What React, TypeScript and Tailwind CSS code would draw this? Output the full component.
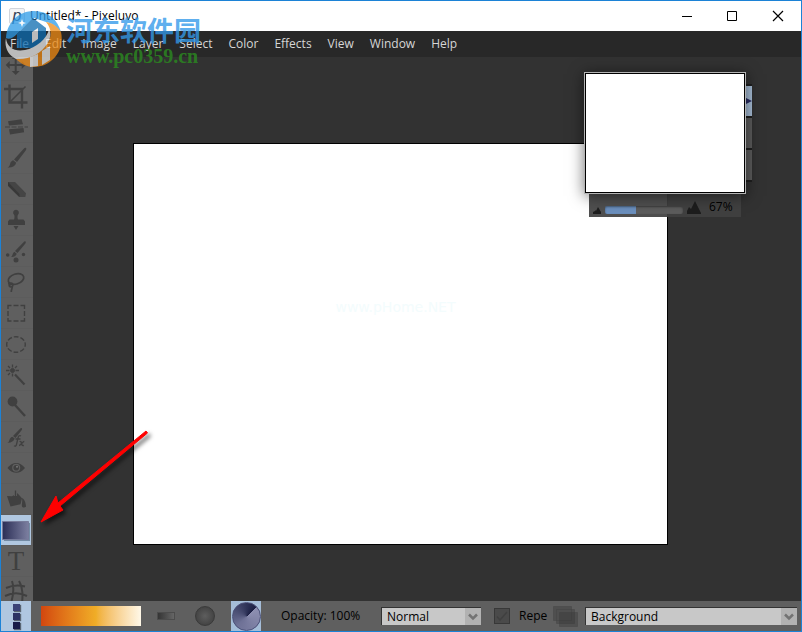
import { useState } from 'react';
import type { ReactNode } from 'react';

const MENUS = ['File', 'Edit', 'Image', 'Layer', 'Select', 'Color', 'Effects', 'View', 'Window', 'Help'];

interface Tool {
  name: string;
  icon: ReactNode;
}

const TOOLS: Tool[] = [
  {
    name: 'Move',
    icon: (
      <path
        d="M13.700 9h-3l4-4 4 4h-3v5h5v-3l4 4-4 4v-3h-5v5h3l-4 4-4-4h3v-5h-5v3l-4-4 4-4v3h5z"
        fill="currentColor"
      />
    ),
  },
  {
    name: 'Crop',
    icon: (
      <g fill="none" stroke="currentColor" strokeWidth="2.4">
        <path d="M8.500 3.500v18h18M3 8h18v19.500" />
        <path d="M8.500 21.500l16-16" strokeWidth="1.600" />
      </g>
    ),
  },
  {
    name: 'Straighten',
    icon: (
      <>
        <path d="M7 9.200l13.500-2 1.500 5-14 1.200zM8 17.300L22.500 16l.6 4.200L9 22.500z" fill="currentColor" />
        <path d="M4 15h23" stroke="currentColor" strokeWidth="1.200" strokeDasharray="5 1.500" />
      </>
    ),
  },
  {
    name: 'Brush',
    icon: (
      <path
        d="M25 5c.6.5.3 1.500-.3 2.500L16 19l-3-2.500L22.500 6c.9-1 1.900-1.500 2.500-1zM12.200 17.300l3 2.500c-.8 3.200-3.600 5-8.700 4.700 2.200-1 2.200-2.200 2.700-4 .5-1.700 1.600-2.700 3-3.200z"
        fill="currentColor"
      />
    ),
  },
  {
    name: 'Eraser',
    icon: (
      <>
        <path d="M7 8h7l11 11.300-.7 3.700h-6L7 11.700z" fill="#454545" />
        <path d="M7 8l11.500 12-.2 3L7 11.700z" fill="#383838" />
      </>
    ),
  },
  {
    name: 'Stamp',
    icon: (
      <path
        d="M15 4.800a2.900 2.900 0 0 1 2 5c-.6.700-.7 3.200 0 4.700h5.500l1.500 2V20H7v-3.500l1.500-2H13c.8-1.500.6-4 0-4.700a2.900 2.900 0 0 1 2-5zM12.500 21h5L15 25z"
        fill="currentColor"
      />
    ),
  },
  {
    name: 'Clone brush',
    icon: (
      <g fill="currentColor">
        <path d="M24.500 5.500c.6.500.2 1.500-.3 2.300L16.500 17 14 15l8.300-8.500c.7-.8 1.600-1.500 2.200-1zM13.300 15.700l2.400 2c-.7 2.500-2.500 3.500-5.500 3.300 1.500-1.300 1.200-3.800 3.100-5.300z" />
        <circle cx="6.700" cy="19" r="1.800" />
        <circle cx="22.500" cy="18.500" r="1.700" />
        <circle cx="15" cy="24" r="2.500" />
      </g>
    ),
  },
  {
    name: 'Lasso',
    icon: (
      <g fill="none" stroke="currentColor" strokeWidth="1.700">
        <ellipse cx="15" cy="12" rx="8" ry="5" transform="rotate(-18 15 12)" />
        <circle cx="10" cy="18" r="1.800" />
        <path d="M7.500 15.500c.4 1.500 1.500 2 2.500 2.500M11 19c1 2-1 3.500-.7 6" />
      </g>
    ),
  },
  {
    name: 'Rectangle select',
    icon: (
      <path
        d="M7 11V7.500h3.500M12.500 7.500h5M19.500 7.500h4V11M23.500 13v5M23.500 20v3h-4M17.500 23h-5M10.500 23H7v-3M7 18v-5"
        fill="none"
        stroke="currentColor"
        strokeWidth="1.400"
      />
    ),
  },
  {
    name: 'Ellipse select',
    icon: (
      <ellipse
        cx="15"
        cy="15.500"
        rx="9.300"
        ry="7.800"
        fill="none"
        stroke="currentColor"
        strokeWidth="1.400"
        strokeDasharray="4.700 2"
        strokeDashoffset="2.300"
      />
    ),
  },
  {
    name: 'Magic wand',
    icon: (
      <g stroke="currentColor">
        <circle cx="11.500" cy="10.500" r="2" fill="currentColor" />
        <path d="M11.500 4.500v3M11.500 13.500v3M5 10.500h3.500M14.500 10.500H18M7 6l2 2M16 6l-2 2M7 15l2-2" strokeWidth="1.300" />
        <path d="M14 14.500l9.500 10" strokeWidth="2.200" />
      </g>
    ),
  },
  {
    name: 'Dodge',
    icon: (
      <>
        <circle cx="11.500" cy="10.500" r="4.900" fill="currentColor" />
        <path d="M14 14l10 11" stroke="currentColor" strokeWidth="2.400" />
      </>
    ),
  },
  {
    name: 'Effect brush',
    icon: (
      <>
        <path
          d="M20.800 6.200c.5.400.2 1.300-.2 2L14.500 16 12 14l6.800-7c.6-.7 1.500-1.200 2-.8zM11.400 14.700l2.300 1.900c-.8 2.700-3 4.200-7.200 4.200 1.900-1 1.500-1.800 2.100-3.300.5-1.500 1.600-2.500 2.800-2.800z"
          fill="currentColor"
        />
        <path
          d="M20 14c-1.300-1-2.500-.2-2.900 1.500l-1.600 7c-.4 1.700-1.500 2-2.500 1.300M14.500 17h5M18.500 19.500c1.500-.5 1.700.5 2 2s.8 2.500 2.300 1.800M23.300 19.300c-1.500 0-3.500 4.200-5.300 4.200"
          fill="none"
          stroke="currentColor"
          strokeWidth="1.300"
        />
      </>
    ),
  },
  {
    name: 'Red eye',
    icon: (
      <>
        <path d="M6.500 15c3.500-4.300 6-5 8.700-5 3.300 0 5.900 1.500 8.800 5-3 3.500-5.500 4.700-8.800 4.700-3 0-5.700-1.200-8.700-4.700z" fill="currentColor" />
        <circle cx="15.200" cy="14.800" r="4" fill="#5f5f5f" />
        <circle cx="15.200" cy="14.800" r="2.800" fill="currentColor" />
        <circle cx="16" cy="13.800" r="1" fill="#777" />
      </>
    ),
  },
  {
    name: 'Paint bucket',
    icon: (
      <>
        <path d="M6 12l5 .3 5.500-3 4.500 5-1.500 6L9.500 22.500z" fill="currentColor" />
        <path d="M14.500 12V7" stroke="#5f5f5f" strokeWidth="3" />
        <path d="M14.500 6.500V13" stroke="currentColor" strokeWidth="1.300" />
        <path d="M21 14c2.500 1 4 5.500 4 8.800-1.300 1.200-3.500 1-4-.3-.7-2 .8-4.500 0-8.500z" fill="currentColor" />
      </>
    ),
  },
  {
    name: 'Gradient',
    icon: (
      <>
        <defs>
          <linearGradient id="tool-gradient">
            <stop offset="0" stopColor="#2b2e56" />
            <stop offset="1" stopColor="#7c7fa0" />
          </linearGradient>
        </defs>
        <path d="M3 8h26v18H3z" fill="#738ba5" />
        <path d="M1.500 6.500h26v18h-26z" fill="url(#tool-gradient)" stroke="#777b9a" />
      </>
    ),
  },
  {
    name: 'Text',
    icon: (
      <text x="15" y="24" textAnchor="middle" fill="currentColor" className="font-['Liberation_Serif'] text-[27px]">
        T
      </text>
    ),
  },
  {
    name: 'Warp',
    icon: (
      <path
        d="M11 4c2 6 1.500 14-1 22M18 4c3.500 6 4 14 3 22M5 11c7-3 13-3 19-1.500M4 19c7-3.500 14-4 22 0"
        fill="none"
        stroke="currentColor"
        strokeWidth="2"
      />
    ),
  },
];

function TitleBar() {
  return (
    <header className="flex h-[30px] shrink-0 items-center bg-white pl-2">
      <span className="flex size-4 items-center justify-center rounded-xs border border-gray-300 bg-gray-100 font-['Liberation_Sans'] text-base leading-none text-slate-700 italic">
        p
      </span>
      <h1 className="ml-[5px] grow text-xs text-black">Untitled* - Pixeluvo</h1>
      <button aria-label="Minimize" className="flex h-full w-[46px] items-center justify-center">
        <svg width="12" height="12" stroke="#000">
          <path d="M1 6.500h10" />
        </svg>
      </button>
      <button aria-label="Maximize" className="flex h-full w-[45px] items-center justify-center">
        <svg width="11" height="11" fill="none" stroke="#000">
          <path d="M.5.500h9v9h-9z" />
        </svg>
      </button>
      <button aria-label="Close" className="flex h-full w-[46px] items-center justify-center">
        <svg width="12" height="12" stroke="#000" strokeWidth="1.200">
          <path d="M1 1l10 10M11 1L1 11" />
        </svg>
      </button>
    </header>
  );
}

function MenuBar() {
  return (
    <nav className="flex h-[26px] shrink-0 items-center gap-4 bg-[#282828] pl-[9px] text-xs text-[#d6d6d6]">
      {MENUS.map((menu) => (
        <button key={menu}>{menu}</button>
      ))}
    </nav>
  );
}

function ToolBar() {
  const [active, setActive] = useState('Gradient');

  return (
    <aside className="flex w-8 shrink-0 flex-col justify-center overflow-hidden bg-[#5f5f5f]">
      {TOOLS.map((tool) => (
        <button
          key={tool.name}
          aria-label={tool.name}
          onClick={() => setActive(tool.name)}
          className="h-[31px] shrink-0 border-b border-[#5c5c5c] text-[#404040]"
        >
          <svg
            viewBox="0 0 30 30"
            className={tool.name === active ? 'size-[30px] bg-[#b0c7e0]' : 'size-[30px]'}
          >
            {tool.icon}
          </svg>
        </button>
      ))}
    </aside>
  );
}

function Navigator() {
  return (
    <div className="absolute top-[15px] right-[49px]">
      <div className="flex items-start">
        <div className="z-10 h-[122px] w-[162px] border border-[#b4b4b4] bg-white shadow-[0_2px_14px_rgba(0,0,0,0.55)]">
          <div className="h-full border border-black" />
        </div>
        <div className="mt-3 flex w-1.5 flex-col gap-0.5 bg-[#1f1f1f] py-0.5">
          <button aria-label="Navigator" className="flex h-[30px] items-center bg-[#a8bfd8]">
            <svg width="6" height="8" fill="#2b2e66">
              <path d="M0 1l6 3-6 3z" />
            </svg>
          </button>
          <button aria-label="Histogram" className="h-[30px] bg-[#5c5c5c]" />
          <button aria-label="History" className="h-[30px] bg-[#5c5c5c]" />
        </div>
      </div>
      <div className="ml-[5px] flex h-[23px] w-[152px] items-end bg-[#424242]/93 pb-[3px] pl-1 text-xs text-black">
        <svg width="8" height="7" fill="#1d1d1d">
          <path d="M0 7V5l2-1v-1l1 1 2-4 3 5v2z" />
        </svg>
        <input
          type="range"
          aria-label="Zoom"
          defaultValue={40}
          className="mx-1 h-2 w-[78px] appearance-none rounded-xs bg-linear-to-r from-[#6b8fbd] from-40% to-[#5c5c5c] to-40% shadow-[inset_0_1px_2px_rgba(0,0,0,0.4)] [&::-webkit-slider-thumb]:size-0 [&::-webkit-slider-thumb]:appearance-none"
        />
        <svg width="14" height="13" fill="#1d1d1d">
          <path d="M0 13v-3l2-4 2 2 4-8 6 12v1z" />
        </svg>
        <output className="ml-2 leading-[14px]">67%</output>
      </div>
    </div>
  );
}

interface DropDownProps {
  label: string;
  value: string;
  className: string;
}

function DropDown({ label, value, className }: DropDownProps) {
  return (
    <div className={`relative h-[18px] ${className}`}>
      <select
        aria-label={label}
        className="block h-full w-full appearance-none border-t border-l border-[#333] bg-[#c8c8c8] pl-[5px] text-xs leading-4 text-black"
      >
        <option>{value}</option>
      </select>
      <span className="pointer-events-none absolute top-px right-0 bottom-0 flex w-4 items-center justify-center bg-[#b2b2b2]">
        <svg width="10" height="8" fill="none" stroke="#737373" strokeWidth="2.500">
          <path d="M1 1.500l4 4 4-4" />
        </svg>
      </span>
    </div>
  );
}

function OptionsBar() {
  return (
    <footer className="flex h-[30px] shrink-0 items-center bg-[#5f5f5f] text-xs text-black">
      <button
        aria-label="Gradient presets"
        className="flex h-full w-[30px] shrink-0 flex-col items-center justify-center gap-0.5 bg-[#b0c7e0]"
      >
        <span className="size-[7px] bg-[#3c4377] shadow-[1px_1px_1px_rgba(0,0,0,0.5)]" />
        <span className="size-[7px] bg-[#2c3263] shadow-[1px_1px_1px_rgba(0,0,0,0.5)]" />
        <span className="size-[7px] bg-[#181c48] shadow-[1px_1px_1px_rgba(0,0,0,0.5)]" />
      </button>
      <button
        aria-label="Edit gradient"
        className="ml-2.5 h-5 w-[100px] shrink-0 bg-linear-to-r from-[#d2460f] via-[#f0ad27] via-55% to-[#fff8e8]"
      />
      <button aria-label="Linear" className="ml-4 h-2 w-[18px] shrink-0 border border-[#4c4c4c] bg-linear-to-r from-[#353535] to-[#666]" />
      <button
        aria-label="Radial"
        className="ml-5 size-5 shrink-0 rounded-full border border-[#3a3a3a] bg-radial from-[#5e5e5e] to-[#3a3a3a]"
      />
      <button aria-label="Angular" className="ml-4 flex size-[30px] shrink-0 items-center justify-center bg-[#a5bdd8]">
        <span className="size-[29px] rounded-full border border-[#4b5078] bg-conic-45 from-[#8e90b2] via-[#6e7196] to-[#1c2044]" />
      </button>
      <button className="ml-5 w-20 shrink-0 text-left whitespace-nowrap">Opacity: 100%</button>
      <DropDown label="Blend mode" value="Normal" className="ml-5 w-[100px] shrink-0" />
      <label className="ml-[13px] flex w-[54px] shrink-0 items-center gap-[9px]">
        <span className="relative size-4 shrink-0">
          <input type="checkbox" defaultChecked className="block size-4 appearance-none border border-[#383838] bg-[#4a4a4a]" />
          <svg viewBox="0 0 16 16" className="pointer-events-none absolute inset-0" fill="none" stroke="#404040" strokeWidth="1.500">
            <path d="M3 8.500l3 3.500 7-8" />
          </svg>
        </span>
        Repe
      </label>
      <svg width="25" height="21" className="ml-[5px] shrink-0" fill="#333" fillOpacity="0.350" stroke="#3a3a3a" strokeOpacity="0.300">
        <path d="M.5.500h18v14H.5zM3.500 3.500h18v14h-18z" />
        <path d="M6.500 6.500h18v14h-18z" />
      </svg>
      <DropDown label="Layer" value="Background" className="mr-1 ml-[7px] grow" />
    </footer>
  );
}

// Site watermark laid over the top left corner of the window
function SiteMark() {
  return (
    <div className="pointer-events-none absolute top-[9px] left-1 z-20 flex items-start gap-1">
      <svg width="57" height="58" viewBox="0 0 57 58" opacity="0.750">
        <path d="M1 28C2 12 14 1 29 1c14 0 24 9 27 21-4-5-9-9-15-10L29 8 12 24C8 28 4 30 1 28z" fill="#2d9be8" />
        <path d="M12 24L28 8l13 10v20H12z" fill="#0d6bb0" />
        <path d="M41 12c7 1 12 5 15 10 4 18-9 35-27 35-7 0-13-3-18-8 12 0 24-6 31-15 5-7 5-15-1-22z" fill="#f08a12" />
        <path d="M1 28c-2 9 2 17 10 21 13 1 25-5 31-15 4-6 4-11 2-15-2 10-13 19-24 21C10 42 2 38 1 28z" fill="#ececec" />
        <path d="M27 33V22l6-4v11zM25 47l8-3v12l-8 1zM37 41l8-5v14l-8 5z" fill="#ececec" />
        <path d="M17 9l1 3 3 1-3 1-1 3-1-3-3-1 3-1z" fill="#fff" />
      </svg>
      <div className="mt-0.5">
        <p className="font-['Noto_Sans_CJK_SC',sans-serif] text-[27px] leading-9 font-bold text-[#3399ea]/80">河东软件园</p>
        <p className="font-['Liberation_Serif',serif] text-xl leading-4 font-bold text-[#2b8221]/90">www.pc0359.cn</p>
      </div>
    </div>
  );
}

function Arrow() {
  return (
    <svg
      width="120"
      height="104"
      className="pointer-events-none absolute top-[427px] left-[34px] z-20 drop-shadow-[3px_3px_2px_rgba(0,0,0,0.6)]"
    >
      <path d="M111 3l1.500 2L25 78l3 4-22 12L21 68l2 7z" fill="#f00" stroke="#f00" />
    </svg>
  );
}

export default function App() {
  return (
    <div className="relative flex h-screen flex-col overflow-hidden border border-[#1c82d6] bg-[#323232] font-['Open_Sans','Noto_Sans',sans-serif]">
      <TitleBar />
      <MenuBar />
      <div className="flex min-h-0 grow">
        <ToolBar />
        <main className="relative flex grow items-center justify-center overflow-hidden pt-[30px] pr-[33px]">
          <div className="flex h-[402px] w-[535px] shrink-0 justify-center border border-black bg-white pt-[153px]">
            <p className="pr-2.5 font-['DejaVu_Sans',sans-serif] text-sm text-[#f3fcfd]">www.pHome.NET</p>
          </div>
          <Navigator />
        </main>
      </div>
      <OptionsBar />
      <SiteMark />
      <Arrow />
    </div>
  );
}
